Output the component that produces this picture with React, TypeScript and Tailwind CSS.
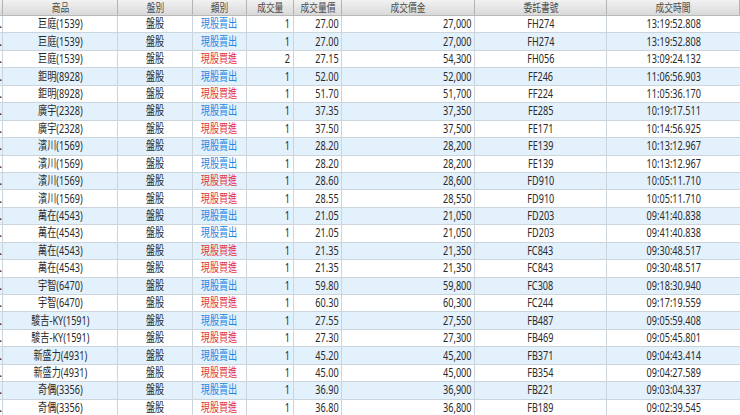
import React from 'react';

type Trade = {
    name: string;
    side: 'sell' | 'buy';
    qty: number;
    price: string;
    amount: string;
    order: string;
    time: string;
};

const trades: Trade[] = [
    { name: '巨庭(1539)', side: 'sell', qty: 1, price: '27.00', amount: '27,000', order: 'FH274', time: '13:19:52.808' },
    { name: '巨庭(1539)', side: 'sell', qty: 1, price: '27.00', amount: '27,000', order: 'FH274', time: '13:19:52.808' },
    { name: '巨庭(1539)', side: 'buy', qty: 2, price: '27.15', amount: '54,300', order: 'FH056', time: '13:09:24.132' },
    { name: '鉅明(8928)', side: 'sell', qty: 1, price: '52.00', amount: '52,000', order: 'FF246', time: '11:06:56.903' },
    { name: '鉅明(8928)', side: 'buy', qty: 1, price: '51.70', amount: '51,700', order: 'FF224', time: '11:05:36.170' },
    { name: '廣宇(2328)', side: 'sell', qty: 1, price: '37.35', amount: '37,350', order: 'FE285', time: '10:19:17.511' },
    { name: '廣宇(2328)', side: 'buy', qty: 1, price: '37.50', amount: '37,500', order: 'FE171', time: '10:14:56.925' },
    { name: '濱川(1569)', side: 'sell', qty: 1, price: '28.20', amount: '28,200', order: 'FE139', time: '10:13:12.967' },
    { name: '濱川(1569)', side: 'sell', qty: 1, price: '28.20', amount: '28,200', order: 'FE139', time: '10:13:12.967' },
    { name: '濱川(1569)', side: 'buy', qty: 1, price: '28.60', amount: '28,600', order: 'FD910', time: '10:05:11.710' },
    { name: '濱川(1569)', side: 'buy', qty: 1, price: '28.55', amount: '28,550', order: 'FD910', time: '10:05:11.710' },
    { name: '萬在(4543)', side: 'sell', qty: 1, price: '21.05', amount: '21,050', order: 'FD203', time: '09:41:40.838' },
    { name: '萬在(4543)', side: 'sell', qty: 1, price: '21.05', amount: '21,050', order: 'FD203', time: '09:41:40.838' },
    { name: '萬在(4543)', side: 'buy', qty: 1, price: '21.35', amount: '21,350', order: 'FC843', time: '09:30:48.517' },
    { name: '萬在(4543)', side: 'buy', qty: 1, price: '21.35', amount: '21,350', order: 'FC843', time: '09:30:48.517' },
    { name: '宇智(6470)', side: 'sell', qty: 1, price: '59.80', amount: '59,800', order: 'FC308', time: '09:18:30.940' },
    { name: '宇智(6470)', side: 'buy', qty: 1, price: '60.30', amount: '60,300', order: 'FC244', time: '09:17:19.559' },
    { name: '駿吉-KY(1591)', side: 'sell', qty: 1, price: '27.55', amount: '27,550', order: 'FB487', time: '09:05:59.408' },
    { name: '駿吉-KY(1591)', side: 'buy', qty: 1, price: '27.30', amount: '27,300', order: 'FB469', time: '09:05:45.801' },
    { name: '新盛力(4931)', side: 'sell', qty: 1, price: '45.20', amount: '45,200', order: 'FB371', time: '09:04:43.414' },
    { name: '新盛力(4931)', side: 'buy', qty: 1, price: '45.00', amount: '45,000', order: 'FB354', time: '09:04:27.589' },
    { name: '奇偶(3356)', side: 'sell', qty: 1, price: '36.90', amount: '36,900', order: 'FB221', time: '09:03:04.337' },
    { name: '奇偶(3356)', side: 'buy', qty: 1, price: '36.80', amount: '36,800', order: 'FB189', time: '09:02:39.545' },
];

const headers = [
    { label: '', w: 'w-[3px]' },
    { label: '商品', w: 'w-[115px]' },
    { label: '盤別', w: 'w-[75px]' },
    { label: '類別', w: 'w-[54px]' },
    { label: '成交量', w: 'w-[47px]' },
    { label: '成交量價', w: 'w-[48px]' },
    { label: '成交價金', w: 'w-[133px]' },
    { label: '委託書號', w: 'w-[132px]' },
    { label: '成交時間', w: 'flex-1' },
];

// the grid renders glyphs a bit narrow, squeeze text horizontally
function Txt({ children, right }: { children: React.ReactNode; right?: boolean }) {
    return (
        <span className={`inline-block whitespace-nowrap scale-x-[0.76] ${right ? 'origin-right' : 'origin-center'}`}>
            {children}
        </span>
    );
}

export default function App() {
    return (
        <div
            className="w-[740px] h-[415px] overflow-hidden bg-white text-[12px] text-[#2a2a2a]"
            style={{ fontFamily: '"Noto Sans", "Noto Sans CJK TC", sans-serif' }}
        >
            {/* Header */}
            <div className="flex h-[16px] bg-gradient-to-b from-[#f2f2f2] to-[#d9d9d9] border-b border-[#b9b9b9]">
                {headers.map((h, i) => (
                    <div
                        key={i}
                        className={`${h.w} shrink-0 flex items-center justify-center border-r border-[#b3b3b3] text-[11.5px] text-[#4a4a4a] leading-none`}
                    >
                        <Txt>{h.label}</Txt>
                    </div>
                ))}
            </div>

            {/* Rows */}
            {trades.map((t, i) => (
                <div
                    key={i}
                    className={`flex h-[17.45px] border-b border-[#cdd5dc] leading-none ${i % 2 === 1 ? 'bg-[#e3f1fc]' : 'bg-white'}`}
                >
                    <div className="w-[3px] shrink-0 border-r border-[#cdd5dc] overflow-visible flex items-center justify-start -indent-[1px]">.</div>
                    <div className="w-[115px] shrink-0 border-r border-[#cdd5dc] flex items-center justify-center">
                        <Txt>{t.name}</Txt>
                    </div>
                    <div className="w-[75px] shrink-0 border-r border-[#cdd5dc] flex items-center justify-center">
                        <Txt>盤股</Txt>
                    </div>
                    <div
                        className={`w-[54px] shrink-0 border-r border-[#cdd5dc] flex items-center justify-center ${t.side === 'sell' ? 'text-[#2287e3]' : 'text-[#e2333d]'}`}
                    >
                        <Txt>{t.side === 'sell' ? '現股賣出' : '現股買進'}</Txt>
                    </div>
                    <div className="w-[47px] shrink-0 border-r border-[#cdd5dc] flex items-center justify-end pr-[3px]">
                        <Txt right>{t.qty}</Txt>
                    </div>
                    <div className="w-[48px] shrink-0 border-r border-[#cdd5dc] flex items-center justify-end pr-[2px]">
                        <Txt right>{t.price}</Txt>
                    </div>
                    <div className="w-[133px] shrink-0 border-r border-[#cdd5dc] flex items-center justify-end pr-[2px]">
                        <Txt right>{t.amount}</Txt>
                    </div>
                    <div className="w-[132px] shrink-0 border-r border-[#cdd5dc] flex items-center justify-center">
                        <Txt>{t.order}</Txt>
                    </div>
                    <div className="flex-1 flex items-center justify-center">
                        <Txt>{t.time}</Txt>
                    </div>
                </div>
            ))}
        </div>
    );
}
